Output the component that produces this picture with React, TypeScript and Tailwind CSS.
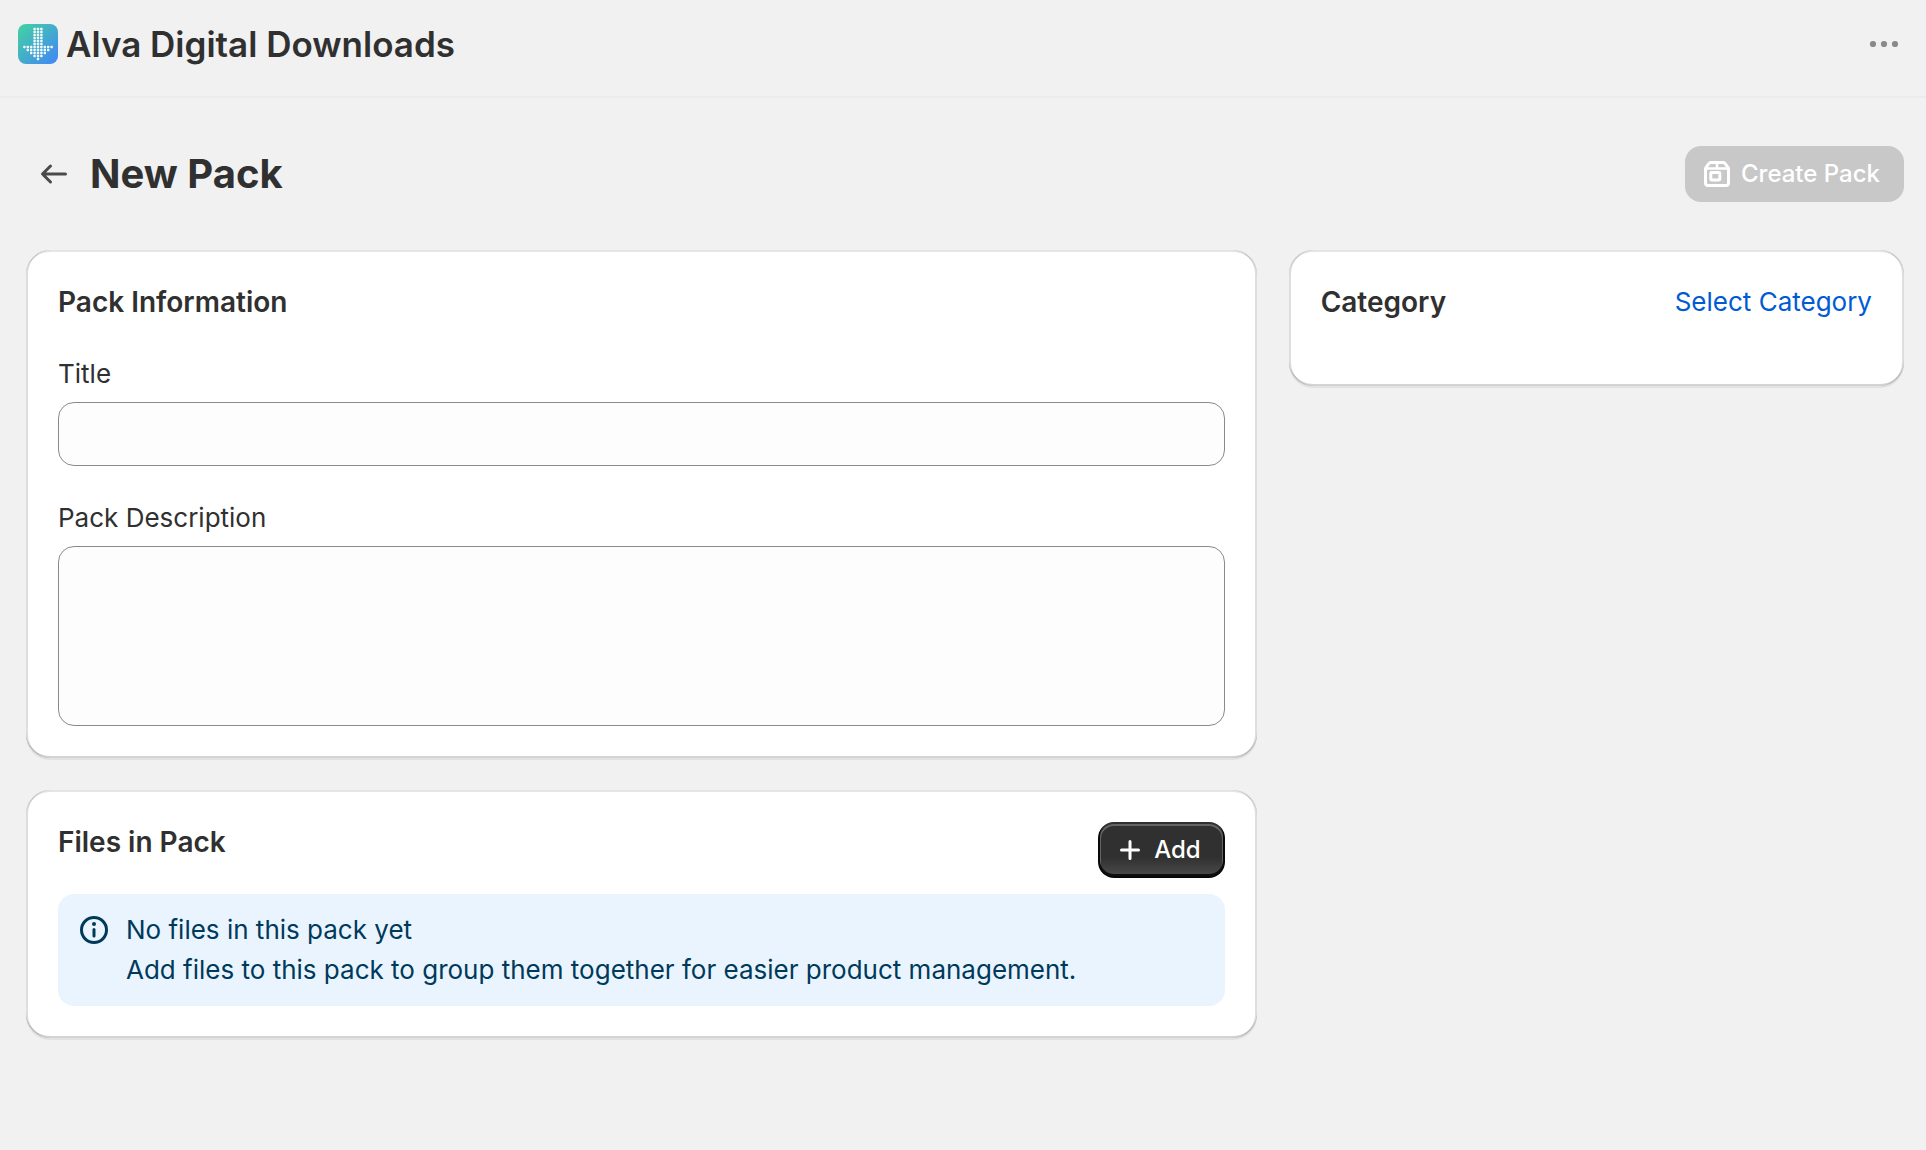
import { useState } from "react";
import type { ReactNode } from "react";

const LOGO_ROWS = [3, 3, 3, 3, 3, 3, 9, 7, 5, 3, 1];

function AppLogo() {
  return (
    <svg viewBox="0 0 40 40" className="size-10 shrink-0" aria-hidden="true">
      <defs>
        <linearGradient id="logo-bg" x1="0" y1="0" x2="1" y2="1">
          <stop offset="0" stopColor="#43d3a0" />
          <stop offset="1" stopColor="#4285f8" />
        </linearGradient>
      </defs>
      <rect width="40" height="40" rx="8" fill="url(#logo-bg)" />
      {LOGO_ROWS.map((count, row) =>
        Array.from({ length: count }, (_, i) => (
          <rect
            key={`${row}-${i}`}
            x={20 + (i - (count - 1) / 2) * 3.4 - 1.2}
            y={5 + row * 3 - 1.15}
            width="2.4"
            height="2.3"
            rx="0.6"
            fill="#fff"
            fillOpacity="0.95"
          />
        ))
      )}
    </svg>
  );
}

function MenuIcon() {
  return (
    <svg viewBox="0 0 40 40" className="size-10" fill="#8a8a8a" aria-hidden="true">
      <circle cx="9" cy="20" r="3.1" />
      <circle cx="20" cy="20" r="3.1" />
      <circle cx="31" cy="20" r="3.1" />
    </svg>
  );
}

function ArrowLeftIcon() {
  return (
    <svg
      viewBox="0 0 20 20"
      className="size-10"
      fill="none"
      stroke="#4a4a4a"
      strokeWidth="1.5"
      strokeLinecap="round"
      strokeLinejoin="round"
      aria-hidden="true"
    >
      <path d="M15.75 10H4.4M8.25 6 4.25 10l4 4" />
    </svg>
  );
}

function PackageIcon() {
  return (
    <svg
      viewBox="0 0 20 20"
      className="size-10"
      fill="none"
      stroke="currentColor"
      strokeWidth="1.5"
      strokeLinejoin="round"
      aria-hidden="true"
    >
      <path d="M4.25 7.6v7a1.15 1.15 0 0 0 1.15 1.15h9.2a1.15 1.15 0 0 0 1.15-1.15v-7c0-.3-.1-.6-.3-.9l-1.35-1.85a1.3 1.3 0 0 0-1-.6H6.9a1.3 1.3 0 0 0-1 .6L4.55 6.7c-.2.3-.3.6-.3.9Z" />
      <path d="M4.25 7.25h11.5M10 4.25v3" strokeWidth="1.3" />
      <rect x="6.9" y="9.25" width="4.5" height="3.7" rx="0.4" />
    </svg>
  );
}

function PlusIcon() {
  return (
    <svg
      viewBox="0 0 20 20"
      className="size-10"
      fill="none"
      stroke="currentColor"
      strokeWidth="1.5"
      strokeLinecap="round"
      aria-hidden="true"
    >
      <path d="M10 5.75v8.5M5.75 10h8.5" />
    </svg>
  );
}

function InfoIcon() {
  return (
    <svg viewBox="0 0 20 20" className="size-10 shrink-0" fill="none" aria-hidden="true">
      <circle cx="10" cy="10" r="6.25" stroke="currentColor" strokeWidth="1.5" />
      <path d="M10 9.7v3.3" stroke="currentColor" strokeWidth="1.5" strokeLinecap="round" />
      <circle cx="10" cy="7" r="1" fill="currentColor" />
    </svg>
  );
}

function Card({ children }: { children: ReactNode }) {
  return (
    <section className="rounded-3xl bg-white p-8 shadow-[0_2px_0_0_rgba(26,26,26,0.07),inset_2px_0_0_0_rgba(0,0,0,0.13),inset_-2px_0_0_0_rgba(0,0,0,0.13),inset_0_-2px_0_0_rgba(0,0,0,0.17),inset_0_2px_0_0_rgba(204,204,204,0.5)]">
      {children}
    </section>
  );
}

export default function App() {
  const [title, setTitle] = useState("");
  const [description, setDescription] = useState("");

  return (
    <div className="min-h-screen bg-[#f1f1f1] font-['Inter',sans-serif] text-[26px] leading-10 text-[#303030]">
      <header className="flex items-start justify-between border-b-2 border-[#ebebeb] pt-6 pr-[22px] pb-8 pl-[18px]">
        <div className="flex items-center gap-2">
          <AppLogo />
          <span className="text-[35px] leading-10 font-semibold">Alva Digital Downloads</span>
        </div>
        <button type="button" aria-label="More actions">
          <MenuIcon />
        </button>
      </header>

      <main className="pt-12 pr-[22px] pb-12 pl-[26px]">
        <div className="flex items-center justify-between pl-2">
          <div className="flex items-center gap-4">
            <button type="button" aria-label="Back">
              <ArrowLeftIcon />
            </button>
            <h1 className="text-[40px] leading-12 font-bold">New Pack</h1>
          </div>
          <button
            type="button"
            disabled={!title}
            className="flex h-14 items-center gap-1 rounded-2xl bg-[#303030] pr-6 pl-3 text-2xl font-medium text-white disabled:bg-[#c8c8c8]"
          >
            <PackageIcon />
            Create Pack
          </button>
        </div>

        <div className="mt-12 grid grid-cols-[2fr_1fr] items-start gap-8">
          <div className="flex flex-col gap-8">
            <Card>
              <h2 className="text-[28px] leading-10 font-semibold">Pack Information</h2>
              <div className="mt-8 flex flex-col gap-2">
                <label htmlFor="pack-title">Title</label>
                <input
                  id="pack-title"
                  type="text"
                  value={title}
                  onChange={(e) => setTitle(e.target.value)}
                  className="h-16 w-full rounded-2xl border border-[#8a8a8a] bg-[#fdfdfd] px-6"
                />
              </div>
              <div className="mt-8 flex flex-col gap-2">
                <label htmlFor="pack-description">Pack Description</label>
                <textarea
                  id="pack-description"
                  value={description}
                  onChange={(e) => setDescription(e.target.value)}
                  className="h-[180px] w-full resize-none rounded-2xl border border-[#8a8a8a] bg-[#fdfdfd] px-6 py-3"
                />
              </div>
            </Card>

            <Card>
              <div className="flex items-start justify-between">
                <h2 className="text-[28px] leading-10 font-semibold">Files in Pack</h2>
                <button
                  type="button"
                  className="flex h-14 items-center gap-1 rounded-2xl bg-[#303030] bg-[linear-gradient(180deg,rgba(48,48,48,0)_63%,rgba(255,255,255,0.15)_100%)] pr-6 pl-3 text-2xl font-medium text-white shadow-[inset_0_-2px_0_2px_rgba(0,0,0,0.8),inset_0_0_0_2px_#303030,inset_0_1px_0_3px_rgba(255,255,255,0.25)]"
                >
                  <PlusIcon />
                  Add
                </button>
              </div>
              <div className="mt-4 flex gap-3 rounded-2xl bg-[#eaf4ff] p-4 text-[#003a5a]">
                <InfoIcon />
                <div>
                  <p>No files in this pack yet</p>
                  <p>Add files to this pack to group them together for easier product management.</p>
                </div>
              </div>
            </Card>
          </div>

          <Card>
            <div className="flex items-center justify-between pb-8">
              <h2 className="text-[28px] leading-10 font-semibold">Category</h2>
              <button type="button" className="text-[#005bd3]">
                Select Category
              </button>
            </div>
          </Card>
        </div>
      </main>
    </div>
  );
}
